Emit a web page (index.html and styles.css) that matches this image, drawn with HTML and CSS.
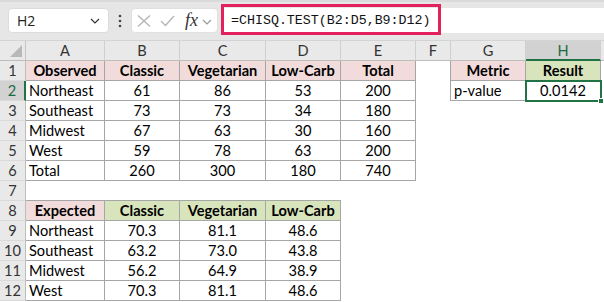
FILE: index.html
```html
<!DOCTYPE html>
<html>
<head>
<meta charset="utf-8">
<link rel="stylesheet" href="styles.css">
</head>
<body>
<div class="app">
  <div class="toolbar">
    <div class="namebox">
      <span class="ref">H2</span>
      <svg class="chev" width="10" height="6" viewBox="0 0 10 6"><path d="M1 1 L5 5 L9 1" fill="none" stroke="#333" stroke-width="1.2"/></svg>
    </div>
    <div class="dots">
      <svg width="4" height="14" viewBox="0 0 4 14"><circle cx="2" cy="2" r="1.3" fill="#444"/><circle cx="2" cy="7" r="1.3" fill="#444"/><circle cx="2" cy="12" r="1.3" fill="#444"/></svg>
    </div>
    <div class="fxbox">
      <svg class="ic" width="14" height="12" viewBox="0 0 14 12"><path d="M1 0.5 L13 11.5 M13 0.5 L1 11.5" fill="none" stroke="#b4b4b4" stroke-width="1.3"/></svg>
      <svg class="ic" width="15" height="12" viewBox="0 0 15 12"><path d="M1 6 L5.5 10.5 L14 1" fill="none" stroke="#b4b4b4" stroke-width="1.3"/></svg>
      <span class="fx">fx</span>
      <svg class="chev2" width="10" height="6" viewBox="0 0 10 6"><path d="M1 1 L5 5 L9 1" fill="none" stroke="#999" stroke-width="1.2"/></svg>
    </div>
    <div class="formula">
      <span class="ftext">=CHISQ.TEST(B2:D5,B9:D12)</span>
      <div class="hl"></div>
    </div>
  </div>

  <div class="sheet">
    <div class="corner"><span class="tri"></span></div>
    <div class="ch">A</div><div class="ch">B</div><div class="ch">C</div><div class="ch">D</div><div class="ch">E</div><div class="ch">F</div><div class="ch">G</div><div class="ch sel">H</div><div class="ch last"></div>

    <div class="rh">1</div>
    <div class="c b pk bold ctr">Observed</div><div class="c b pk bold ctr">Classic</div><div class="c b pk bold ctr">Vegetarian</div><div class="c b pk bold ctr">Low-Carb</div><div class="c b pk bold ctr">Total</div>
    <div class="c br"></div><div class="c b pk bold ctr">Metric</div><div class="c b gr bold ctr">Result</div><div class="c"></div>

    <div class="rh sel">2</div>
    <div class="c b">Northeast</div><div class="c b ctr">61</div><div class="c b ctr">86</div><div class="c b ctr">53</div><div class="c b ctr">200</div>
    <div class="c br"></div><div class="c b">p-value</div><div class="c b ctr active">0.0142<span class="handle"></span></div><div class="c"></div>

    <div class="rh">3</div>
    <div class="c b">Southeast</div><div class="c b ctr">73</div><div class="c b ctr">73</div><div class="c b ctr">34</div><div class="c b ctr">180</div>
    <div class="c"></div><div class="c"></div><div class="c"></div><div class="c"></div>

    <div class="rh">4</div>
    <div class="c b">Midwest</div><div class="c b ctr">67</div><div class="c b ctr">63</div><div class="c b ctr">30</div><div class="c b ctr">160</div>
    <div class="c"></div><div class="c"></div><div class="c"></div><div class="c"></div>

    <div class="rh">5</div>
    <div class="c b">West</div><div class="c b ctr">59</div><div class="c b ctr">78</div><div class="c b ctr">63</div><div class="c b ctr">200</div>
    <div class="c"></div><div class="c"></div><div class="c"></div><div class="c"></div>

    <div class="rh">6</div>
    <div class="c b">Total</div><div class="c b ctr">260</div><div class="c b ctr">300</div><div class="c b ctr">180</div><div class="c b ctr">740</div>
    <div class="c"></div><div class="c"></div><div class="c"></div><div class="c"></div>

    <div class="rh">7</div>
    <div class="c bb"></div><div class="c bb"></div><div class="c bb"></div><div class="c bb"></div><div class="c"></div>
    <div class="c"></div><div class="c"></div><div class="c"></div><div class="c"></div>

    <div class="rh">8</div>
    <div class="c b pk bold ctr">Expected</div><div class="c b gr bold ctr">Classic</div><div class="c b gr bold ctr">Vegetarian</div><div class="c b gr bold ctr">Low-Carb</div><div class="c"></div>
    <div class="c"></div><div class="c"></div><div class="c"></div><div class="c"></div>

    <div class="rh">9</div>
    <div class="c b">Northeast</div><div class="c b ctr">70.3</div><div class="c b ctr">81.1</div><div class="c b ctr">48.6</div><div class="c"></div>
    <div class="c"></div><div class="c"></div><div class="c"></div><div class="c"></div>

    <div class="rh">10</div>
    <div class="c b">Southeast</div><div class="c b ctr">63.2</div><div class="c b ctr">73.0</div><div class="c b ctr">43.8</div><div class="c"></div>
    <div class="c"></div><div class="c"></div><div class="c"></div><div class="c"></div>

    <div class="rh">11</div>
    <div class="c b">Midwest</div><div class="c b ctr">56.2</div><div class="c b ctr">64.9</div><div class="c b ctr">38.9</div><div class="c"></div>
    <div class="c"></div><div class="c"></div><div class="c"></div><div class="c"></div>

    <div class="rh">12</div>
    <div class="c b">West</div><div class="c b ctr">70.3</div><div class="c b ctr">81.1</div><div class="c b ctr">48.6</div><div class="c"></div>
    <div class="c"></div><div class="c"></div><div class="c"></div><div class="c"></div>
  </div>
</div>
</body>
</html>
```

FILE: styles.css
```css
* { box-sizing: border-box; }
html, body { margin: 0; padding: 0; background: #fff; }
body { width: 604px; height: 302px; overflow: hidden; }

.app { width: 604px; }

.toolbar {
  height: 41px;
  background: #e6e6e6;
  border-top: 2px solid #dadada;
  border-bottom: 1px solid #d4d4d4;
  display: flex;
  align-items: flex-start;
  padding-top: 6px;
  padding-left: 8px;
}

.namebox {
  width: 101px;
  height: 25px;
  background: #fff;
  border: 1px solid #dcdcdc;
  border-radius: 4px;
  display: flex;
  align-items: center;
  justify-content: space-between;
  padding: 0 8px 0 8px;
  font-family: "Open Sans", "Noto Sans", sans-serif;
  font-size: 14px;
  color: #222;
}
.namebox .chev { margin-top: 1px; }

.dots {
  width: 22px;
  height: 25px;
  display: flex;
  align-items: center;
  justify-content: center;
}

.fxbox {
  width: 87px;
  height: 25px;
  background: #fff;
  border: 1px solid #e0e0e0;
  border-radius: 4px;
  display: flex;
  align-items: center;
  padding-left: 5px;
}
.fxbox .ic { margin-right: 9px; }
.fxbox .ic + .ic { margin-right: 10px; }
.fx {
  font-family: "Liberation Serif", serif;
  font-style: italic;
  font-size: 18px;
  color: #333;
  line-height: 1;
  margin-top: -2px;
  margin-right: 4px;
}
.chev2 { margin-top: 2px; }

.formula {
  position: relative;
  flex: 1;
  height: 25px;
  margin-left: 3px;
  background: #fff;
  display: flex;
  align-items: center;
  padding-left: 10px;
}
.ftext {
  font-family: "Liberation Mono", monospace;
  font-size: 13.3px;
  color: #111;
}
.hl {
  position: absolute;
  left: 0;
  top: -4px;
  width: 220px;
  height: 31px;
  border: 3px solid #e3215d;
}

.sheet {
  display: grid;
  grid-template-columns: 26px 79px 75px 86px 75px 75px 35px 75px 75px 1fr;
  grid-auto-rows: 20px;
  font-family: "Lato", "Liberation Sans", sans-serif;
  font-size: 14.6px;
  color: #000;
}

.corner {
  position: relative;
  background: #e9e9e9;
  border-right: 1px solid #c4c4c4;
  border-bottom: 1px solid #bdbdbd;
}
.tri {
  position: absolute;
  right: 3px;
  bottom: 3px;
  width: 0;
  height: 0;
  border-left: 12px solid transparent;
  border-bottom: 12px solid #b8b8b8;
}

.ch {
  background: #e9e9e9;
  border-right: 1px solid #cfcfcf;
  border-bottom: 1px solid #bdbdbd;
  display: flex;
  align-items: center;
  justify-content: center;
  color: #333;
  font-size: 14.6px;
}
.ch.last { border-right: none; }
.ch.sel {
  background: #d2d2d2;
  color: #1f6b41;
  border-bottom: 2px solid #217346;
}

.rh {
  background: #e9e9e9;
  border-right: 1px solid #bdbdbd;
  border-bottom: 1px solid #dadada;
  display: flex;
  align-items: center;
  justify-content: center;
  color: #333;
  font-size: 14.6px;
}
.rh.sel {
  background: #d2d2d2;
  color: #1f6b41;
  border-right: 2px solid #217346;
}

.c {
  display: flex;
  align-items: center;
  padding: 0 2px 0 3px;
  white-space: nowrap;
  position: relative;
}
.b { border-right: 1px solid #a6a6a6; border-bottom: 1px solid #a6a6a6; }
.bb { border-bottom: 1px solid #a6a6a6; }
.br { border-right: 1px solid #a6a6a6; }
.ctr { justify-content: center; padding: 0; }
.bold { font-weight: 700; }
.pk { background: #f2dcdb; }
.gr { background: #d8e4bc; }

.active {
  outline: 2px solid #217346;
  outline-offset: -1px;
  z-index: 2;
}
.handle {
  position: absolute;
  right: -4px;
  bottom: -4px;
  width: 6px;
  height: 6px;
  background: #217346;
  border: 1px solid #fff;
}
```
